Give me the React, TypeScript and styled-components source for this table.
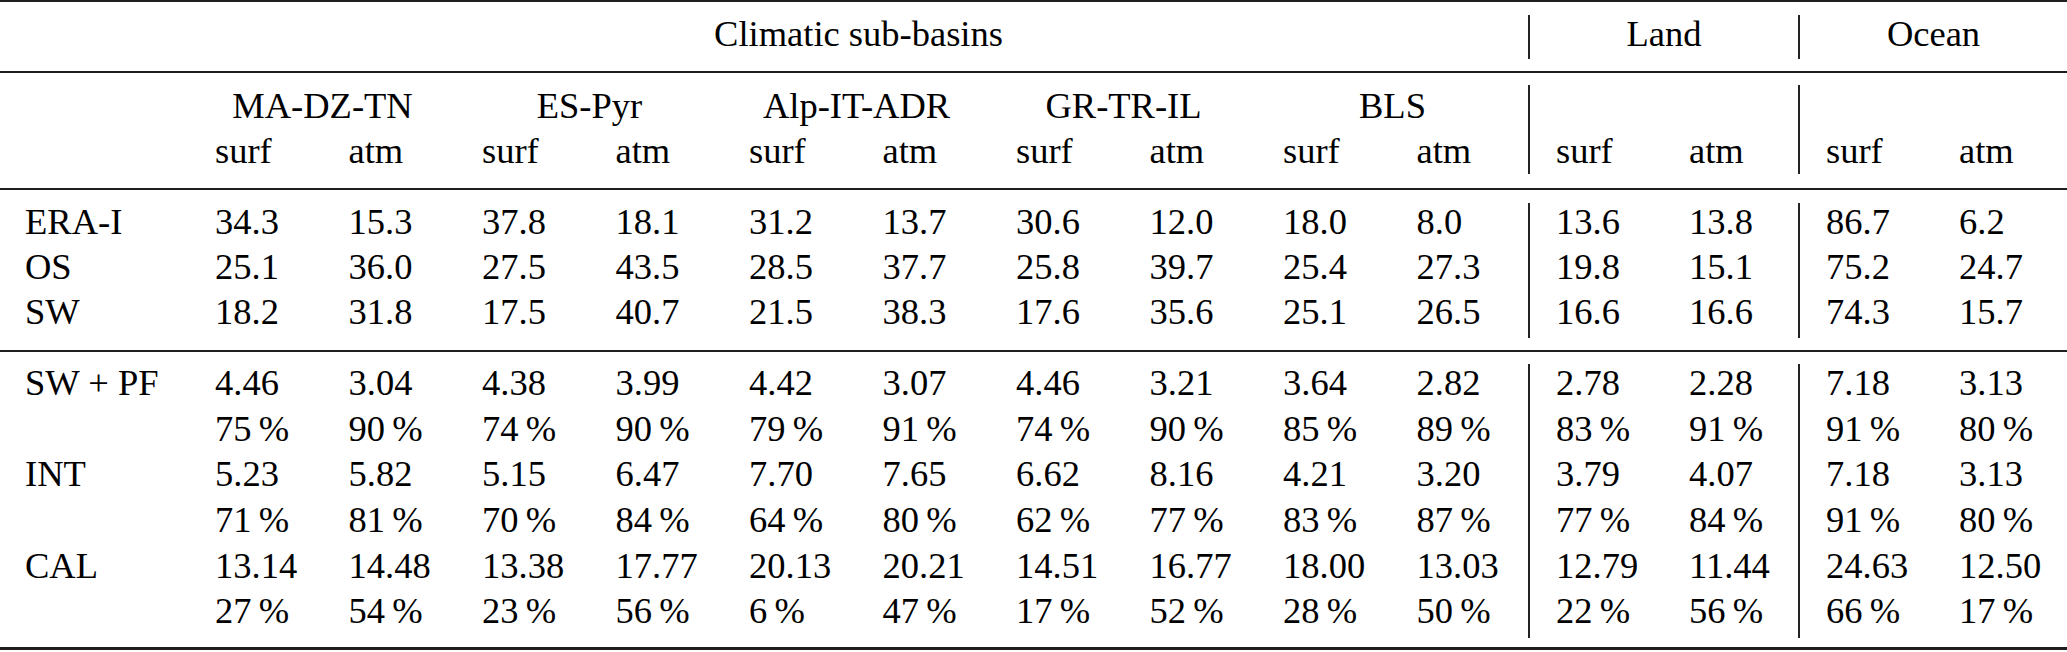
import React from 'react';
import styled, { createGlobalStyle } from 'styled-components';

// column grid shared by every band of the table (label, 10 sub-basin cols, bar, land x2, bar, ocean x2)
const COLS = '189px repeat(9, 133.5px) 137.5px 2px 133px 135px 2px 133px 134px';

const SERIF = '"Liberation Serif", Tinos, "Times New Roman", Times, "Nimbus Roman", "DejaVu Serif", serif';

const REGIONS = ['MA-DZ-TN', 'ES-Pyr', 'Alp-IT-ADR', 'GR-TR-IL', 'BLS'];

const REFERENCE = [
  ['ERA-I', '34.3', '15.3', '37.8', '18.1', '31.2', '13.7', '30.6', '12.0', '18.0', '8.0', '13.6', '13.8', '86.7', '6.2'],
  ['OS', '25.1', '36.0', '27.5', '43.5', '28.5', '37.7', '25.8', '39.7', '25.4', '27.3', '19.8', '15.1', '75.2', '24.7'],
  ['SW', '18.2', '31.8', '17.5', '40.7', '21.5', '38.3', '17.6', '35.6', '25.1', '26.5', '16.6', '16.6', '74.3', '15.7'],
];

const SCORES = [
  {
    name: 'SW + PF',
    values: ['4.46', '3.04', '4.38', '3.99', '4.42', '3.07', '4.46', '3.21', '3.64', '2.82', '2.78', '2.28', '7.18', '3.13'],
    pct: [75, 90, 74, 90, 79, 91, 74, 90, 85, 89, 83, 91, 91, 80],
  },
  {
    name: 'INT',
    values: ['5.23', '5.82', '5.15', '6.47', '7.70', '7.65', '6.62', '8.16', '4.21', '3.20', '3.79', '4.07', '7.18', '3.13'],
    pct: [71, 81, 70, 84, 64, 80, 62, 77, 83, 87, 77, 84, 91, 80],
  },
  {
    name: 'CAL',
    values: ['13.14', '14.48', '13.38', '17.77', '20.13', '20.21', '14.51', '16.77', '18.00', '13.03', '12.79', '11.44', '24.63', '12.50'],
    pct: [27, 54, 23, 56, 6, 47, 17, 52, 28, 50, 22, 56, 66, 17],
  },
];

const GlobalStyle = createGlobalStyle`
  html, body {
    margin: 0;
    padding: 0;
    background: #ffffff;
  }
  body {
    font-family: ${SERIF};
    color: #000000;
  }
`;

const Table = styled.div`
  width: 2067px;
  display: flex;
  flex-direction: column;
  font-family: ${SERIF};
  font-size: 36.5px;
  color: #000000;
`;

const Rule = styled.div<{ $h: number }>`
  height: ${(p) => p.$h}px;
  background: #1e1e1e;
`;

const Band = styled.div<{ $pt: number; $pb: number; $rows: number; $rowH: number; $lh: number }>`
  display: grid;
  grid-template-columns: ${COLS};
  grid-template-rows: repeat(${(p) => p.$rows}, ${(p) => p.$rowH}px);
  padding: ${(p) => p.$pt}px 0 ${(p) => p.$pb}px;
  line-height: ${(p) => p.$lh}px;
`;

const Label = styled.div`
  padding-left: 25px;
  white-space: nowrap;
`;

const Cell = styled.div`
  padding-left: 26px;
  white-space: nowrap;
`;

const Group = styled.div<{ $span: number }>`
  grid-column: span ${(p) => p.$span};
  text-align: center;
  white-space: nowrap;
`;

const Bar = styled.div<{ $col: number }>`
  grid-column: ${(p) => p.$col};
  grid-row: 1 / -1;
  background: #232323;
`;

const Bars = () => (
  <>
    <Bar $col={12} />
    <Bar $col={15} />
  </>
);

const pct = (n: number) => `${n}\u2009%`;

const App: React.FC = () => {
  return (
    <>
      <GlobalStyle />
      <Table>
        <Rule $h={2} />
        <Band $pt={12.5} $pb={12} $rows={1} $rowH={44.5} $lh={38.4}>
          <Bars />
          <Label />
          <Group $span={10}>Climatic sub-basins</Group>
          <Group $span={2}>Land</Group>
          <Group $span={2}>Ocean</Group>
        </Band>
        <Rule $h={2} />
        <Band $pt={12} $pb={14} $rows={2} $rowH={44.5} $lh={42.4}>
          <Bars />
          <Label />
          {REGIONS.map((r) => (
            <Group key={r} $span={2}>{r}</Group>
          ))}
          <Group $span={2} />
          <Group $span={2} />
          <Label />
          {Array.from({ length: 7 }).map((_, i) => (
            <React.Fragment key={i}>
              <Cell>surf</Cell>
              <Cell>atm</Cell>
            </React.Fragment>
          ))}
        </Band>
        <Rule $h={2} />
        <Band $pt={12.5} $pb={12.5} $rows={3} $rowH={45} $lh={38.8}>
          <Bars />
          {REFERENCE.map((row) => (
            <React.Fragment key={row[0]}>
              <Label>{row[0]}</Label>
              {row.slice(1).map((v, i) => (
                <Cell key={i}>{v}</Cell>
              ))}
            </React.Fragment>
          ))}
        </Band>
        <Rule $h={2} />
        <Band $pt={12} $pb={8.8} $rows={6} $rowH={45.7} $lh={37.4}>
          <Bars />
          {SCORES.map((s) => (
            <React.Fragment key={s.name}>
              <Label>{s.name}</Label>
              {s.values.map((v, i) => (
                <Cell key={'v' + i}>{v}</Cell>
              ))}
              <Label />
              {s.pct.map((n, i) => (
                <Cell key={'p' + i}>{pct(n)}</Cell>
              ))}
            </React.Fragment>
          ))}
        </Band>
        <Rule $h={3} />
      </Table>
    </>
  );
};

export default App;
